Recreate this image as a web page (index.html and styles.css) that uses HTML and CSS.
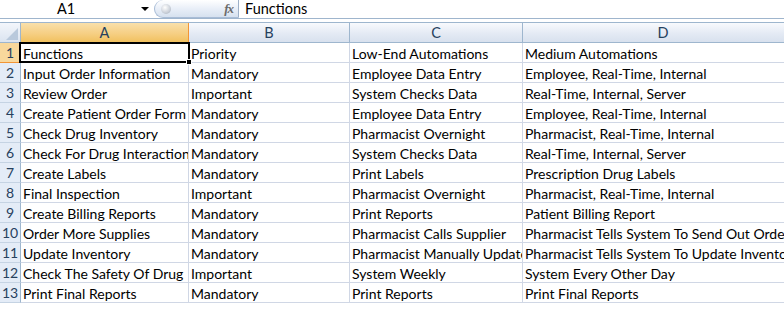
FILE: index.html
```html
<!DOCTYPE html>
<html>
<head>
<meta charset="utf-8">
<link rel="stylesheet" href="styles.css">
</head>
<body>
<div class="app">
  <div class="fbar">
    <div class="namebox"><span class="nb-text">A1</span><span class="nb-arrow"></span></div>
    <div class="pill"><span class="knob"></span><span class="fx">fx</span></div>
    <div class="formula">Functions</div>
  </div>
  <div class="sheet">
    <div class="row hdr">
      <div class="corner"><span class="tri"></span></div>
      <div class="ch sel ca">A</div>
      <div class="ch cb">B</div>
      <div class="ch cc">C</div>
      <div class="ch cd">D</div>
    </div>
    <div class="row"><div class="rh sel">1</div><div class="c ca active">Functions<span class="selbox"><span class="handle"></span></span></div><div class="c cb">Priority</div><div class="c cc">Low-End Automations</div><div class="c cd">Medium Automations</div></div>
    <div class="row"><div class="rh">2</div><div class="c ca">Input Order Information</div><div class="c cb">Mandatory</div><div class="c cc">Employee Data Entry</div><div class="c cd">Employee, Real-Time, Internal</div></div>
    <div class="row"><div class="rh">3</div><div class="c ca">Review Order</div><div class="c cb">Important</div><div class="c cc">System Checks Data</div><div class="c cd">Real-Time, Internal, Server</div></div>
    <div class="row"><div class="rh">4</div><div class="c ca">Create Patient Order Form</div><div class="c cb">Mandatory</div><div class="c cc">Employee Data Entry</div><div class="c cd">Employee, Real-Time, Internal</div></div>
    <div class="row"><div class="rh">5</div><div class="c ca">Check Drug Inventory</div><div class="c cb">Mandatory</div><div class="c cc">Pharmacist Overnight</div><div class="c cd">Pharmacist, Real-Time, Internal</div></div>
    <div class="row"><div class="rh">6</div><div class="c ca">Check For Drug Interactions</div><div class="c cb">Mandatory</div><div class="c cc">System Checks Data</div><div class="c cd">Real-Time, Internal, Server</div></div>
    <div class="row"><div class="rh">7</div><div class="c ca">Create Labels</div><div class="c cb">Mandatory</div><div class="c cc">Print Labels</div><div class="c cd">Prescription Drug Labels</div></div>
    <div class="row"><div class="rh">8</div><div class="c ca">Final Inspection</div><div class="c cb">Important</div><div class="c cc">Pharmacist Overnight</div><div class="c cd">Pharmacist, Real-Time, Internal</div></div>
    <div class="row"><div class="rh">9</div><div class="c ca">Create Billing Reports</div><div class="c cb">Mandatory</div><div class="c cc">Print Reports</div><div class="c cd">Patient Billing Report</div></div>
    <div class="row"><div class="rh">10</div><div class="c ca">Order More Supplies</div><div class="c cb">Mandatory</div><div class="c cc">Pharmacist Calls Supplier</div><div class="c cd">Pharmacist Tells System To Send Out Orders</div></div>
    <div class="row"><div class="rh">11</div><div class="c ca">Update Inventory</div><div class="c cb">Mandatory</div><div class="c cc">Pharmacist Manually Updates</div><div class="c cd">Pharmacist Tells System To Update Inventory</div></div>
    <div class="row"><div class="rh">12</div><div class="c ca">Check The Safety Of Drug</div><div class="c cb">Important</div><div class="c cc">System Weekly</div><div class="c cd">System Every Other Day</div></div>
    <div class="row"><div class="rh">13</div><div class="c ca">Print Final Reports</div><div class="c cb">Mandatory</div><div class="c cc">Print Reports</div><div class="c cd">Print Final Reports</div></div>
  </div>
</div>
</body>
</html>
```

FILE: styles.css
```css
* { box-sizing: border-box; }
html, body { margin: 0; padding: 0; background: #fff; }
body { width: 784px; height: 313px; overflow: hidden; font-family: Lato, "Open Sans", sans-serif; font-size: 14px; color: #000; }
.app { width: 784px; }

.fbar { display: flex; height: 19px; border-bottom: 1px solid #9fb5cd; background: #fff; }
.namebox { width: 154px; display: flex; align-items: center; position: relative; }
.nb-text { width: 132px; text-align: center; color: #000; line-height: 18px; font-size: 14.5px; }
.nb-arrow { width: 0; height: 0; border-left: 4px solid transparent; border-right: 4px solid transparent; border-top: 4px solid #000; margin-left: 9px; }
.pill { width: 85px; height: 18px; border: 1px solid #a8bcd6; border-right-color: #9db0c8; border-top: none; border-radius: 9px 0 0 9px; background: linear-gradient(#ffffff, #e9eff8 50%, #d6e1ef); display: flex; align-items: center; justify-content: space-between; padding: 0 5px 0 6px; }
.knob { width: 10px; height: 10px; border-radius: 50%; background: radial-gradient(circle at 40% 35%, #ffffff, #c9cfd8 60%, #9aa3b0); }
.fx { font-family: "Liberation Serif", serif; font-style: italic; font-weight: bold; font-size: 13px; color: #6b6b6b; letter-spacing: -1px; }
.formula { flex: 1; padding-left: 6px; line-height: 18px; font-size: 14.5px; }

.sheet { margin-top: 3px; }
.row { display: flex; height: 20px; }
.row.hdr { height: 21px; border-top: 1px solid #9eb6ce; }
.corner, .ch, .rh, .c { flex: none; border-right: 1px solid #d0d7e5; border-bottom: 1px solid #d0d7e5; overflow: hidden; white-space: nowrap; }
.corner { width: 21px; background: linear-gradient(#f3f6fb, #dbe4f0); border-right-color: #9eb6ce; border-bottom-color: #9eb6ce; position: relative; }
.tri { position: absolute; right: 2px; bottom: 2px; width: 0; height: 0; border-left: 12px solid transparent; border-bottom: 12px solid #b9c9dc; }
.ch { background: linear-gradient(#f8fafd, #e4eaf4 55%, #d8e1ee); border-right-color: #9eb6ce; border-bottom-color: #9eb6ce; text-align: center; line-height: 20px; color: #27415e; font-size: 14.5px; }
.ch.sel { background: linear-gradient(#f9e0ab, #f6cf84 55%, #f1c15f); border-right-color: #f29536; border-bottom-color: #f29536; color: #27415e; }
.ca { width: 168px; }
.cb { width: 161px; }
.cc { width: 173px; }
.cd { width: 281px; }
.rh { width: 21px; background: #e4ecf7; border-right-color: #9eb6ce; border-bottom-color: #c5d3e3; text-align: center; line-height: 20px; color: #27415e; font-size: 14px; }
.rh.sel { background: #f8d89c; border-right-color: #f29536; border-bottom-color: #f29536; }
.c { padding-left: 2px; line-height: 21px; }
.c.active { position: relative; overflow: visible; }
.selbox { position: absolute; left: -2px; top: -1px; right: -2px; bottom: -1px; border: 2px solid #000; pointer-events: none; }
.handle { position: absolute; right: -4px; bottom: -4px; width: 6px; height: 6px; background: #000; border: 1px solid #fff; }
```
